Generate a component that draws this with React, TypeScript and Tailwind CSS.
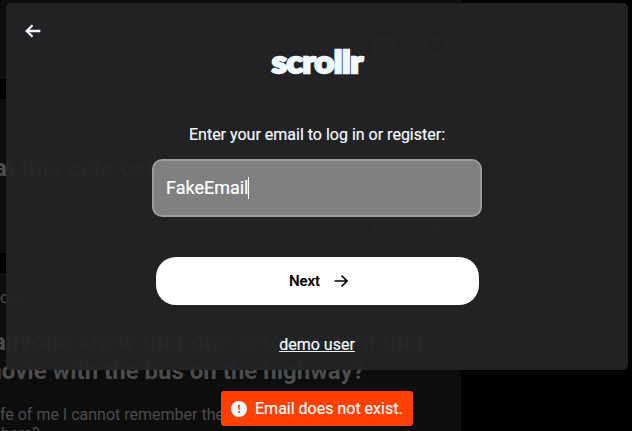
import React from "react";

function Comment({ className = "" }: { className?: string }) {
  return (
    <svg className={`h-6 w-6 ${className}`} viewBox="0 0 24 24" fill="none" stroke="currentColor" strokeWidth="2" strokeLinejoin="round">
      <path d="M12 2.2C6 2.2 1.2 5.8 1.2 11c0 2.4 1 4.6 2.6 6.2-.3 1.8-1.2 3.4-2.4 4.6 2.7 0 4.7-.8 6.3-2.1 1.4.5 2.8.7 4.3.7 6 0 10.8-4.2 10.8-9.4S18 2.2 12 2.2Z" />
    </svg>
  );
}

function Heart({ className = "" }: { className?: string }) {
  return (
    <svg className={`h-6 w-6 ${className}`} viewBox="0 0 24 24" fill="none" stroke="currentColor" strokeWidth="2.1" strokeLinejoin="round">
      <path d="M12 21.2 2.8 12.4C.3 9.9.6 5.7 3.2 3.6 5.8 1.6 9.4 2 12 5.3c2.6-3.3 6.2-3.7 8.8-1.7 2.6 2.1 2.9 6.3.4 8.8Z" />
    </svg>
  );
}

function Actions() {
  return (
    <div className="flex gap-7 pl-[372px] text-[#5a5a5a]">
      <Comment />
      <Heart />
    </div>
  );
}

function Feed() {
  return (
    <div className="flex h-[431px] w-[461px] flex-col gap-5 overflow-hidden whitespace-nowrap text-[#4c4c4c]">
      <article className="h-[79px] shrink-0 bg-[#0d0d0d] pt-9">
        <Actions />
      </article>
      <article className="flex h-[154px] shrink-0 flex-col bg-[#0d0d0d] pt-[54px]">
        <h2 className="-ml-[6px] text-[24px] leading-[30px] font-bold">at this cute cat</h2>
        <div className="mt-[26px]">
          <Actions />
        </div>
      </article>
      <article className="h-[180px] shrink-0 bg-[#0d0d0d] pt-[15px]">
        <p className="text-[16px] leading-5">oyer</p>
        <h2 className="-ml-[7px] mt-5 text-[24px] leading-[29px] font-bold">
          <span className="tracking-[0.1px]">anyone know that one actor is from that</span>
          <br />
          <span className="-ml-[12px]">movie with the bus on the highway?</span>
        </h2>
        <p className="-ml-[4px] mt-[19px] text-[16px] leading-[19px]">
          ife of me I cannot remember the
          <br />
          <span className="ml-[5px]">here?</span>
        </p>
      </article>
    </div>
  );
}

function LoginDialog() {
  return (
    <main className="absolute top-[3px] left-[6px] flex h-[367px] w-[622px] flex-col items-center rounded-[5px] bg-[#232325]/96 text-[#f0f8ff]">
      <button className="mt-[18px] ml-[17px] flex h-5 w-5 items-center justify-center self-start" aria-label="Back">
        <svg className="h-4 w-4" viewBox="0 0 16 16" fill="none" stroke="currentColor" strokeWidth="2.3">
          <path d="M15.3 8H2M7.5 2.2 1.7 8l5.8 5.8" />
        </svg>
      </button>
      <h1 className="mt-[2px] mb-[-1px] flex h-9 scale-x-110 items-center font-['Lato',sans-serif] text-[31px] leading-9 font-black tracking-[-0.4px] [-webkit-text-stroke:2.4px_#f0f8ff]">
        scrollr
      </h1>
      <label htmlFor="email" className="mt-[47px] text-[16px] leading-5 [-webkit-text-stroke:0.2px_#f0f8ff]">
        Enter your email to log in or register:
      </label>
      <div id="email" className="mt-[14px] flex h-[58px] w-[330px] items-center rounded-[10px] border-2 border-[#9c9a9d] bg-[#808080] px-3 text-[18px] text-white">
        <span className="-mt-[2px] -mr-px [-webkit-text-stroke:0.2px_white]">FakeEmail</span>
        <span className="h-[22px] w-px bg-white" />
      </div>
      <button className="mt-10 flex h-12 w-[323px] items-center justify-center gap-[14px] rounded-[20px] bg-white pl-[3px] text-[15px] font-medium text-black">
        <span className="[-webkit-text-stroke:0.2px_black]">Next</span>
        <svg className="h-[14px] w-[14px]" viewBox="0 0 14 14" fill="none" stroke="currentColor" strokeWidth="1.7">
          <path d="M.5 7h12M7.5 1.5 13 7l-5.5 5.5" />
        </svg>
      </button>
      <a className="mt-[30px] text-[16px] leading-5 underline [-webkit-text-stroke:0.2px_#f0f8ff]">demo user</a>
    </main>
  );
}

export default function App() {
  return (
    <div className="relative h-[431px] w-[632px] overflow-hidden bg-black font-['Roboto',sans-serif]">
      <Feed />
      <LoginDialog />
      <div className="absolute top-[391px] left-[221px] flex h-[35px] w-[192px] items-center gap-[8px] rounded-[3px] bg-[#ff4000] pl-[10px] text-[16px] whitespace-nowrap text-[#f0f8ff]">
        <svg className="h-4 w-4 shrink-0" viewBox="0 0 16 16">
          <circle cx="8" cy="8" r="8" fill="#f0f8ff" />
          <path d="M7 4h2l-.4 5H7.4Z" fill="#ff4000" />
          <circle cx="8" cy="11" r="1" fill="#ff4000" />
        </svg>
        <span className="[-webkit-text-stroke:0.2px_#f0f8ff]">Email does not exist.</span>
      </div>
    </div>
  );
}
